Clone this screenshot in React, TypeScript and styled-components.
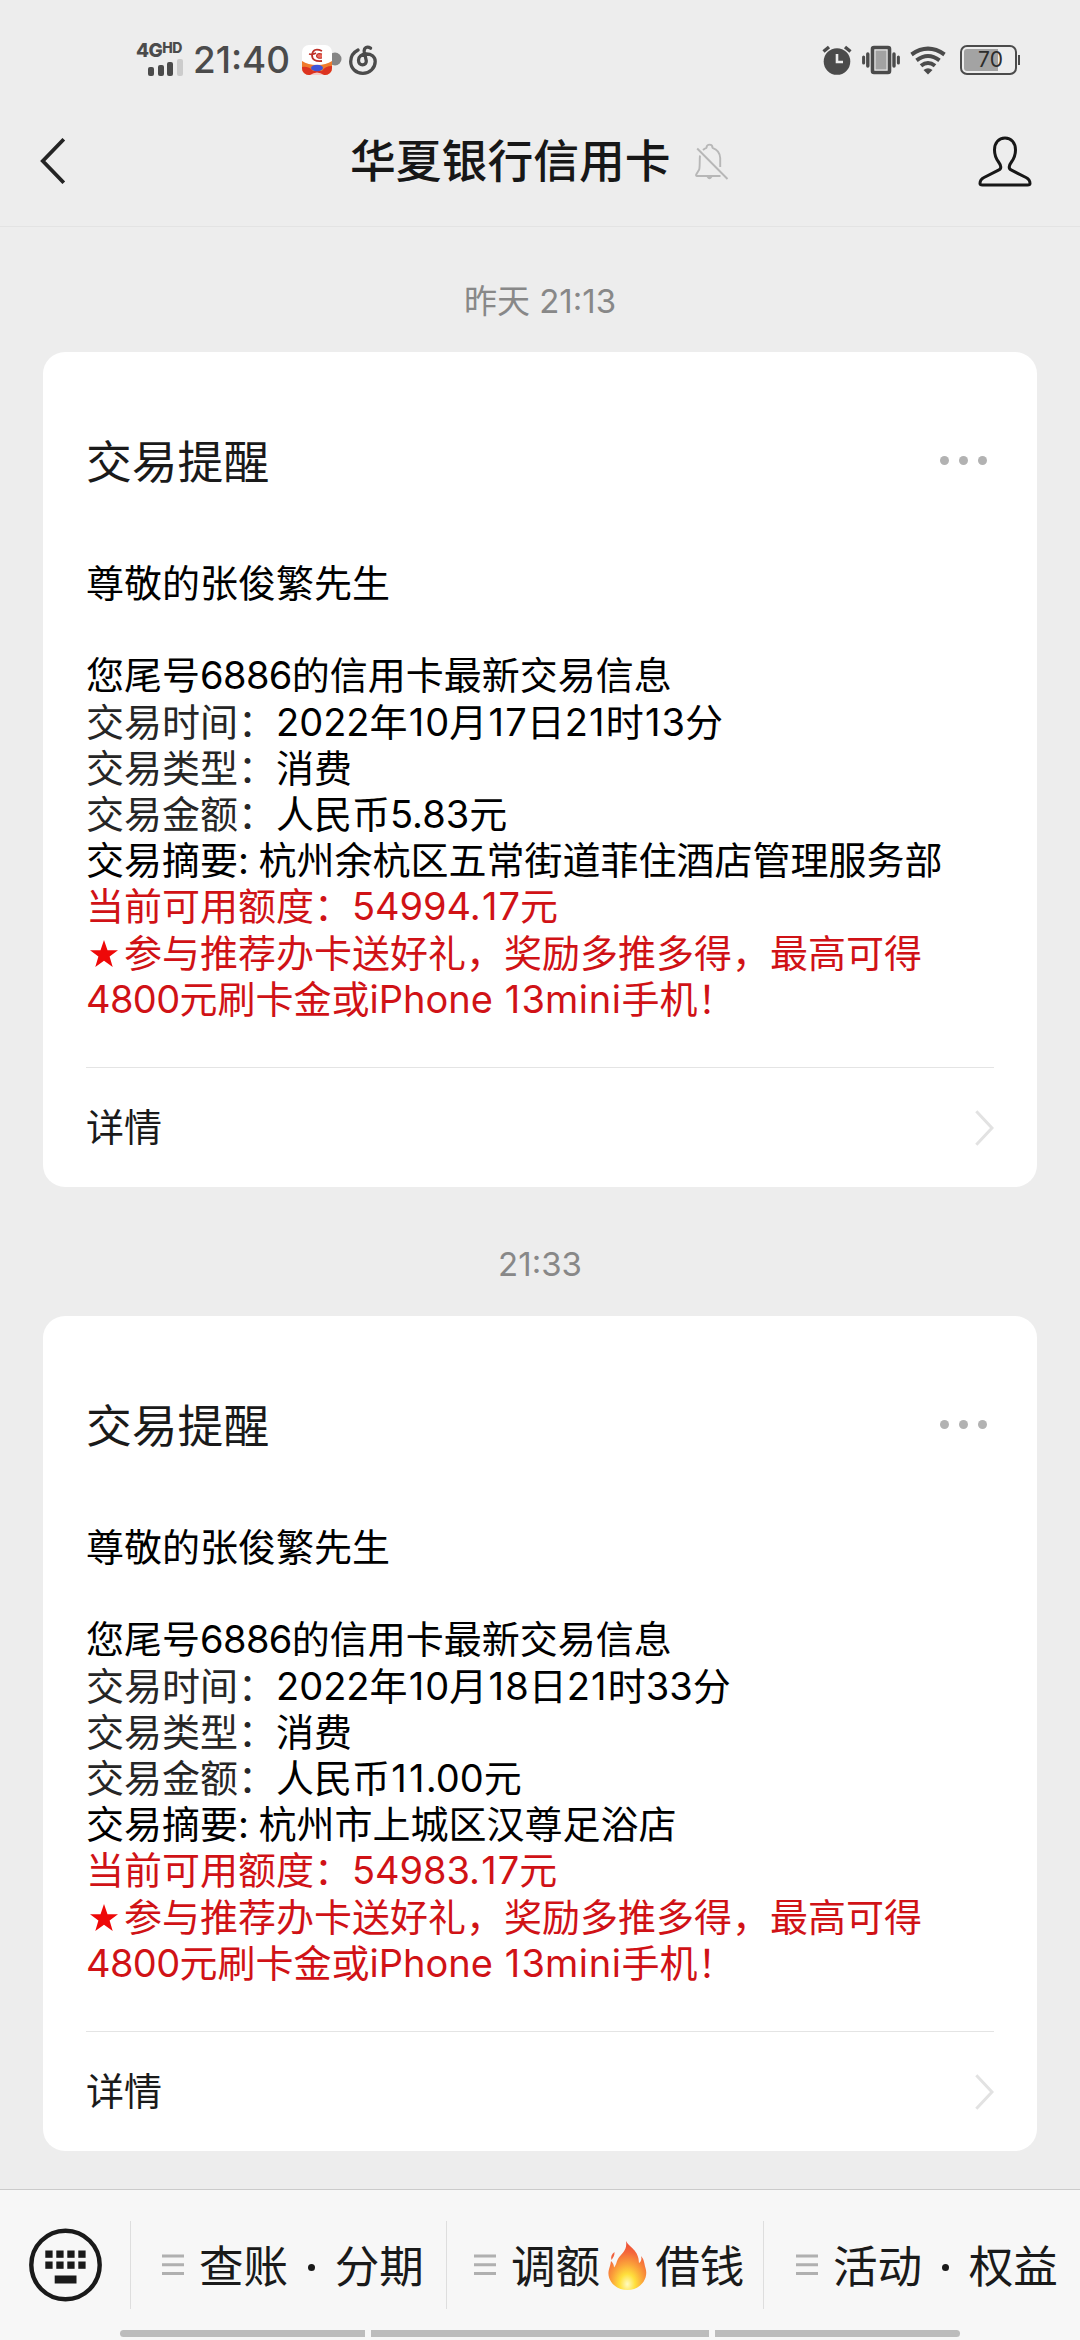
import React from 'react';
import styled, { createGlobalStyle } from 'styled-components';

const GlobalStyle = createGlobalStyle`
  * { box-sizing: border-box; }
  html, body { margin: 0; padding: 0; background: #ededed; }
  body {
    font-family: Inter, "Noto Sans CJK SC", sans-serif;
    font-weight: 400;
    color: #1a1a1a;
  }
  svg { display: block; flex: none; }
`;

const Screen = styled.div`
  width: 1080px;
  height: 2340px;
  display: flex;
  flex-direction: column;
  overflow: hidden;
  background: #ededed;
`;

const StatusBar = styled.header`
  height: 120px;
  flex: none;
  padding: 0 60px 0 136px;
  display: flex;
  align-items: center;
  justify-content: space-between;
  color: #4b4b4b;
`;

const StatusGroup = styled.div<{ $gap: number }>`
  display: flex;
  align-items: center;
  gap: ${(p) => p.$gap}px;
`;

const Network = styled.div`
  width: 48px;
  display: flex;
  flex-direction: column;
  gap: 1px;
  margin-top: -2px;
`;

const NetworkLabel = styled.div`
  height: 15px;
  display: flex;
  align-items: flex-start;
  font-weight: 800;
  font-size: 19px;
  line-height: 15px;
  letter-spacing: -0.6px;
`;

const NetworkSup = styled.span`
  font-size: 14px;
  line-height: 10px;
  letter-spacing: -0.3px;
`;

const Bars = styled.div`
  display: flex;
  align-items: flex-end;
  gap: 3.5px;
  height: 17px;
  padding-left: 12px;
`;

const Bar = styled.i<{ $h: number; $off?: boolean }>`
  width: 6px;
  height: ${(p) => p.$h}px;
  border-radius: 2px;
  background: ${(p) => (p.$off ? '#cccccc' : '#4b4b4b')};
`;

const Clock = styled.div`
  width: 98px;
  margin-left: 9px;
  font-size: 36.8px;
  line-height: 40px;
  font-weight: 500;
  white-space: nowrap;
`;

const Notices = styled.div`
  display: flex;
  align-items: center;
  gap: 7px;
  margin-left: 11px;
`;

const TitleBar = styled.nav`
  height: 107px;
  flex: none;
  padding: 0 48px 24px 40px;
  display: grid;
  grid-template-columns: 310px 1fr 54px;
  align-items: center;
  border-bottom: 1px solid #e3e3e3;
`;

const TitleGroup = styled.div`
  display: flex;
  align-items: center;
  gap: 24px;
`;

const Title = styled.h1`
  margin: 2px 0 0;
  font-size: 45.8px;
  line-height: 60px;
  font-weight: 500;
  color: #171717;
`;

const Feed = styled.main`
  flex: 1;
  padding: 0 43px;
`;

const Stamp = styled.div<{ $height: number; $top: number }>`
  height: ${(p) => p.$height}px;
  padding-top: ${(p) => p.$top}px;
  text-align: center;
  font-size: 33px;
  line-height: 40px;
  color: #888888;
`;

const Card = styled.article`
  height: 835px;
  padding: 0 43px;
  display: flex;
  flex-direction: column;
  background: #ffffff;
  border-radius: 22px;
`;

const CardHead = styled.div`
  height: 220px;
  padding-right: 7px;
  display: flex;
  align-items: center;
  justify-content: space-between;
`;

const CardTitle = styled.h2`
  margin: 2px 0 0;
  font-size: 45.8px;
  line-height: 60px;
  font-weight: 400;
`;

const More = styled.div`
  display: flex;
  gap: 9.5px;
  margin-top: -3px;
`;

const Dot = styled.i`
  width: 9.5px;
  height: 9.5px;
  border-radius: 50%;
  background: #b2b2b2;
`;

const Body = styled.div`
  height: 495px;
  margin-top: -12px;
  font-size: 38px;
  line-height: 46.2px;
`;

const Line = styled.p<{ $red?: boolean }>`
  margin: 0;
  height: 46.2px;
  white-space: pre;
  color: ${(p) => (p.$red ? '#d01216' : '#000000')};
`;

const Label = styled.span`
  color: #262626;
`;

const Star = styled.svg`
  display: inline-block;
  width: 38px;
  height: 30px;
  vertical-align: -2px;
`;

const Track = styled.span<{ $by: number }>`
  letter-spacing: ${(p) => p.$by}px;
`;

const Detail = styled.div`
  height: 120px;
  margin-top: 12px;
  display: flex;
  align-items: center;
  justify-content: space-between;
  border-top: 1px solid #e4e4e4;
  font-size: 38px;
`;

const DetailText = styled.span`
  line-height: 46px;
  margin-top: -1px;
`;

const Dock = styled.footer`
  height: 151px;
  flex: none;
  border-top: 1px solid #cbcbcb;
  background: #f7f7f7;
  display: flex;
  flex-direction: column;
`;

const MenuRow = styled.div`
  height: 140px;
  padding-top: 10px;
  display: grid;
  grid-template-columns: 130px 316px 317px 317px;
  align-items: center;
`;

const KeyboardCell = styled.div`
  padding-left: 28px;
`;

const MenuItem = styled.div<{ $left: number }>`
  height: 88px;
  padding-left: ${(p) => p.$left}px;
  display: flex;
  align-items: center;
  gap: 16px;
  border-left: 1px solid #dedede;
  font-size: 44.6px;
  white-space: nowrap;
`;

const MenuText = styled.span`
  display: flex;
  align-items: center;
  margin-top: 4px;
  margin-left: -1px;
  line-height: 60px;
`;

const MenuDot = styled.i`
  width: 7px;
  height: 7px;
  margin: 0 20px 0 19.5px;
  border-radius: 50%;
  background: #1a1a1a;
`;

const GestureBar = styled.div`
  display: grid;
  grid-template-columns: 245px 338px 245px;
  gap: 6px;
  padding-left: 120px;
  height: 7px;
`;

const Segment = styled.i<{ $radius: string }>`
  background: #bcbcbc;
  border-radius: ${(p) => p.$radius};
`;

const AppBadge = () => (
  <svg width="40" height="30" viewBox="0 0 40 30">
    <circle cx="33" cy="14" r="6.5" fill="#858585" />
    <defs>
      <clipPath id="badge"><rect width="30" height="30" rx="7" /></clipPath>
    </defs>
    <g clipPath="url(#badge)">
      <rect width="30" height="30" fill="#fff" />
      <path d="M0 16 Q6 20 15 20 T30 16 V30 H0Z" fill="#ef7b2d" />
      <path d="M0 22 Q7 21 11 26 L20 26 Q23 21 30 21 V30 H0Z" fill="#dc3320" />
      <ellipse cx="15" cy="23" rx="6" ry="3.3" fill="#3f55d8" />
      <path d="M8 30 Q15 25 22 30Z" fill="#f5c9c4" />
      <path d="M7 9 Q11 10 14 8 M20 6 Q11 2 10 10 Q10 17 20 16" fill="none" stroke="#bd3028" strokeWidth="1.8" />
      <path d="M20 9 Q15 7.500 14.500 11 Q15 14 20 13" fill="#e9695c" stroke="#bd3028" strokeWidth="1.200" />
    </g>
  </svg>
);

const MusicIcon = () => (
  <svg width="28" height="30" viewBox="0 0 28 30" fill="none" stroke="#4b4b4b" strokeWidth="3.300" strokeLinecap="round">
    <path d="M9 5 C4.200 7.500 1.700 11.500 1.700 16.500 C1.700 23.500 7 28.300 13.800 28.300 C20.800 28.300 26.200 23 26.200 16.500 C26.200 11.500 22 9 17.500 9 C12.500 9 9.500 11.800 9.500 15.300 C9.500 18 11.200 19.800 13.500 19.800 C16 19.800 17.600 18 17.200 15.500 L15.300 6.800 C14.600 3 18 .8 21.500 3.200" />
  </svg>
);

const AlarmIcon = () => (
  <svg width="30" height="30" viewBox="0 0 30 30">
    <circle cx="15" cy="16.500" r="13.300" fill="#4b4b4b" />
    <path d="M1.500 6.500 L7 2 M28.500 6.500 L23 2" stroke="#4b4b4b" strokeWidth="3.400" />
    <path d="M15 9 V17 H21" fill="none" stroke="#ededed" strokeWidth="2.600" />
  </svg>
);

const VibrateIcon = () => (
  <svg width="38" height="30" viewBox="0 0 38 30">
    <rect x="10.500" y="2.500" width="17" height="25" rx="1.500" fill="#ededed" stroke="#4b4b4b" strokeWidth="3.600" />
    <rect x="13.500" y="5.500" width="11" height="19" fill="#a3a3a3" />
    <path d="M5.800 9 V21 M32 9 V21" stroke="#4b4b4b" strokeWidth="3.400" strokeLinecap="round" />
    <path d="M1.600 12 V18 M36.400 12 V18" stroke="#4b4b4b" strokeWidth="3" strokeLinecap="round" />
  </svg>
);

const WifiIcon = () => (
  <svg width="36" height="30" viewBox="0 0 36 30" fill="none" stroke="#4b4b4b" strokeWidth="4">
    <path d="M1.500 9.500 Q18 -2.200 34.500 9.500" />
    <path d="M6.500 15.300 Q18 6.800 29.500 15.300" />
    <path d="M11 20.800 Q18 15.300 25 20.800" />
    <path d="M13.500 25 Q18 21.500 22.500 25 L18 29.500Z" fill="#4b4b4b" stroke="none" />
  </svg>
);

const Battery = styled.div`
  display: flex;
  align-items: center;
  gap: 1px;
  height: 30px;
  margin-left: 4px;
`;

const BatteryShell = styled.div`
  width: 57px;
  height: 30px;
  padding: 2px;
  border: 2px solid #4b4b4b;
  border-radius: 7px;
`;

const BatteryFill = styled.div`
  height: 100%;
  border-radius: 3px;
  background: linear-gradient(90deg, #a3a3a3 70%, transparent 70%);
  text-align: center;
  font-size: 21px;
  line-height: 22px;
  padding-left: 4px;
  color: #2c2c2c;
`;

const BatteryTip = styled.i`
  width: 2px;
  height: 10px;
  background: #4b4b4b;
`;

const BackIcon = () => (
  <svg width="26" height="46" viewBox="0 0 26 46" fill="none" stroke="#242424" strokeWidth="3.800">
    <path d="M23.800 1.300 L2.800 23 L23.800 44.700" />
  </svg>
);

const BellOffIcon = () => (
  <svg width="34" height="37" viewBox="0 0 34 37" fill="none" stroke="#b7b7b7" strokeWidth="1.900" strokeLinejoin="round">
    <path d="M5 12.500 C4.500 16 5 24 4.200 26.500 L1.200 31.500 Q.7 33 2 33 H25.500" />
    <path d="M8 7 Q9.500 5.500 11.500 4.800 C11.500 .5 17.500 .5 17.500 4.800 C22.500 6.500 25 10.500 25.200 15 V24" />
    <path d="M12.500 33.500 Q14.500 37 16.500 33.500" fill="#b7b7b7" />
    <path d="M2.200 5.500 L32.500 36" />
  </svg>
);

const PersonIcon = () => (
  <svg width="54" height="51" viewBox="0 0 54 51" fill="none" stroke="#171717" strokeWidth="3" strokeLinejoin="round">
    <path d="M27 2 C20.500 2 16.500 7 16.500 14 C16.500 25 22.800 26 22.800 31 C22.800 32.500 22 33.500 20.500 34.200 L6 41.500 C3 43 2 44.500 2 47.500 Q2 49 4.500 49 H49.500 Q52 49 52 47.500 C52 44.500 51 43 48 41.500 L33.500 34.200 C32 33.500 31.200 32.500 31.200 31 C31.200 26 37.500 25 37.500 14 C37.500 7 33.500 2 27 2Z" />
  </svg>
);

const ChevronIcon = () => (
  <svg width="19" height="36" viewBox="0 0 19 36" fill="none" stroke="#e2e2e2" strokeWidth="3">
    <path d="M1.300 1.300 L17 18 L1.300 34.700" />
  </svg>
);

const KeyboardIcon = () => (
  <svg width="74" height="74" viewBox="0 0 74 74" fill="#1a1a1a">
    <circle cx="37.500" cy="37" r="34.200" fill="none" stroke="#1a1a1a" strokeWidth="4.400" />
    {[17, 28, 39, 50].map((x) => (
      <React.Fragment key={x}>
        <rect x={x + 0.3} y="22.500" width="7.300" height="7.300" />
        <rect x={x + 0.3} y="33.500" width="7.300" height="7.300" />
      </React.Fragment>
    ))}
    <rect x="26.700" y="47.500" width="21.800" height="8" />
  </svg>
);

const MenuLines = () => (
  <svg width="22" height="22" viewBox="0 0 22 22" stroke="#b0b0b0" strokeWidth="3">
    <path d="M0 2 H22 M0 10.700 H22 M0 19.500 H22" />
  </svg>
);

const Flame = styled.svg`
  margin-top: -3px;
`;

const FlameIcon = () => (
  <Flame width="55" height="50" viewBox="-8 0 55 50">
    <defs>
      <radialGradient id="flame" cx="50%" cy="88%" r="82%">
        <stop offset="0" stopColor="#fffbc0" />
        <stop offset=".25" stopColor="#ffe03c" />
        <stop offset=".5" stopColor="#fba43a" />
        <stop offset=".8" stopColor="#f4663a" />
        <stop offset="1" stopColor="#ee5236" />
      </radialGradient>
    </defs>
    <path d="M18 0 C21 6 31 9 31 22 C33 21 34 18.500 33 15 C36.500 19 36 22 37.500 27 C41 38 32 49 19.500 49 C7 49 -1.500 39 .8 29 C1.500 26 2.500 24 3 20 C5 22 6 24 6 26.500 C9 23 8 21 10.500 17 C14 12 19.500 9 18 0Z" fill="url(#flame)" />
    <path d="M6.500 11 C3.500 13 2.500 16 3.500 19 C5 16.500 6.800 14.500 6.500 11Z" fill="#f0603c" />
  </Flame>
);

interface Notice {
  when: string;
  amount: string;
  merchant: string;
  limit: string;
}

const first: Notice = {
  when: '2022年10月17日21时13分',
  amount: '人民币5.83元',
  merchant: '杭州余杭区五常街道菲住酒店管理服务部',
  limit: '54994.17元',
};

const second: Notice = {
  when: '2022年10月18日21时33分',
  amount: '人民币11.00元',
  merchant: '杭州市上城区汉尊足浴店',
  limit: '54983.17元',
};

/* The narrow figure one gets a little extra room on both sides. */
const One = styled.span`
  padding: 0 1.2px;
`;

const Figures = ({ text }: { text: string }) => (
  <>
    {text.split(/(1)/).map((part, i) => (part === '1' ? <One key={i}>1</One> : part))}
  </>
);

const NoticeCard = ({ data }: { data: Notice }) => (
  <Card>
    <CardHead>
      <CardTitle>交易提醒</CardTitle>
      <More><Dot /><Dot /><Dot /></More>
    </CardHead>
    <Body>
      <Line>尊敬的张俊繁先生</Line>
      <Line> </Line>
      <Line>您尾号<Track $by={-0.6}>6886</Track>的信用卡最新交易信息</Line>
      <Line><Label>交易时间：</Label><Figures text={data.when} /></Line>
      <Line><Label>交易类型：</Label>消费</Line>
      <Line><Label>交易金额：</Label><Figures text={data.amount} /></Line>
      <Line>交易摘要<Track $by={-0.6}>: </Track>{data.merchant}</Line>
      <Line $red>当前可用额度：<Track $by={-0.05}><Figures text={data.limit} /></Track></Line>
      <Line $red>
        <Star viewBox="0 0 38 30">
          <path d="M18 1 L21.500 11.200 H32 L23.600 17.500 L26.700 28 L18 21.700 L9.300 28 L12.400 17.500 L4 11.200 H14.500Z" fill="#ee0808" />
        </Star>
        参与推荐办卡送好礼，奖励多推多得，最高可得
      </Line>
      <Line $red><Track $by={-0.6}>4800</Track>元刷卡金或iPhone <Figures text="13" /><Track $by={0.6}>mini</Track>手机！</Line>
    </Body>
    <Detail>
      <DetailText>详情</DetailText>
      <ChevronIcon />
    </Detail>
  </Card>
);

export default function App() {
  return (
    <Screen>
      <GlobalStyle />
      <StatusBar>
        <StatusGroup $gap={0}>
          <Network>
            <NetworkLabel>4G<NetworkSup>HD</NetworkSup></NetworkLabel>
            <Bars><Bar $h={9} /><Bar $h={11} /><Bar $h={14} /><Bar $h={17} $off /></Bars>
          </Network>
          <Clock>21:40</Clock>
          <Notices>
            <AppBadge />
            <MusicIcon />
          </Notices>
        </StatusGroup>
        <StatusGroup $gap={10}>
          <AlarmIcon />
          <VibrateIcon />
          <WifiIcon />
          <Battery>
            <BatteryShell><BatteryFill>70</BatteryFill></BatteryShell>
            <BatteryTip />
          </Battery>
        </StatusGroup>
      </StatusBar>
      <TitleBar>
        <BackIcon />
        <TitleGroup>
          <Title>华夏银行信用卡</Title>
          <BellOffIcon />
        </TitleGroup>
        <PersonIcon />
      </TitleBar>
      <Feed>
        <Stamp $height={125} $top={54}>昨天 21:13</Stamp>
        <NoticeCard data={first} />
        <Stamp $height={129} $top={57}>21:33</Stamp>
        <NoticeCard data={second} />
      </Feed>
      <Dock>
        <MenuRow>
          <KeyboardCell><KeyboardIcon /></KeyboardCell>
          <MenuItem $left={31}>
            <MenuLines />
            <MenuText>查账<MenuDot />分期</MenuText>
          </MenuItem>
          <MenuItem $left={27}>
            <MenuLines />
            <MenuText>调额<FlameIcon />借钱</MenuText>
          </MenuItem>
          <MenuItem $left={32}>
            <MenuLines />
            <MenuText>活动<MenuDot />权益</MenuText>
          </MenuItem>
        </MenuRow>
        <GestureBar>
          <Segment $radius="4px 0 0 4px" />
          <Segment $radius="0" />
          <Segment $radius="0 4px 4px 0" />
        </GestureBar>
      </Dock>
    </Screen>
  );
}
